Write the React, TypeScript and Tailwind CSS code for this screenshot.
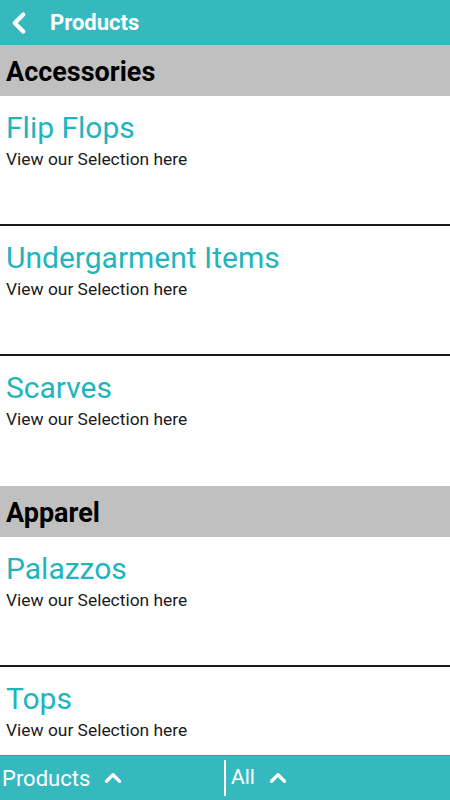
import { ChevronLeft, ChevronUp } from 'lucide-react';

type Section = {
  title: string;
  items: string[];
};

const sections: Section[] = [
  { title: 'Accessories', items: ['Flip Flops', 'Undergarment Items', 'Scarves'] },
  { title: 'Apparel', items: ['Palazzos', 'Tops'] },
];

function ItemRow({ name, last }: { name: string; last: boolean }) {
  return (
    <div className={`h-[130px] shrink-0 px-[6px] pt-[14px] ${last ? '' : 'border-b-2 border-[#1a1a1a]'}`}>
      <div className="text-[30px] leading-[36px] text-[#1fb5bd]">{name}</div>
      <div className="mt-[3px] text-[17.4px] leading-[20px] text-[#1a1a1a]">View our Selection here</div>
    </div>
  );
}

export default function App() {
  return (
    <div className="w-[450px] h-[800px] flex flex-col overflow-hidden bg-white font-['Roboto',sans-serif]">
      <div className="h-[45px] shrink-0 bg-[#35b9bf] flex items-center">
        <ChevronLeft size={34} strokeWidth={3} className="text-white ml-[2px]" />
        <span className="ml-[14px] text-white font-bold text-[22px]">Products</span>
      </div>

      <div className="flex-1 min-h-0 overflow-hidden flex flex-col">
        {sections.map((s) => (
          <div key={s.title} className="flex flex-col">
            <div className="h-[51px] shrink-0 bg-[#c0c0c0] flex items-center px-[6px] pt-[3px]">
              <span className="text-[27px] font-bold text-black">{s.title}</span>
            </div>
            {s.items.map((it, i) => (
              <ItemRow key={it} name={it} last={i === s.items.length - 1} />
            ))}
          </div>
        ))}
      </div>

      <div className="h-[45px] shrink-0 bg-[#35b9bf] border-t border-[#21a9b0] flex items-center">
        <div className="w-[224px] flex items-center pl-[2px]">
          <span className="text-white text-[22px]">Products</span>
          <ChevronUp size={26} strokeWidth={3} className="text-white ml-[10px]" />
        </div>
        <div className="w-[2px] h-[36px] bg-white" />
        <div className="flex items-center pl-[5px]">
          <span className="text-white text-[21px]">All</span>
          <ChevronUp size={26} strokeWidth={3} className="text-white ml-[10px]" />
        </div>
      </div>
    </div>
  );
}
